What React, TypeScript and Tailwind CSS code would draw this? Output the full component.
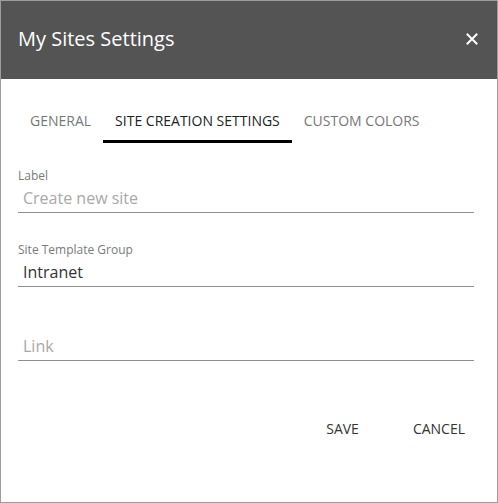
const font = { fontFamily: '"Open Sans", "Noto Sans", sans-serif' };

const Field = ({ label, value, placeholder }: { label?: string; value?: string; placeholder?: string }) => (
  <div className="flex flex-col">
    <div className="h-[14px] text-[12px] leading-[14px] text-[#7a7a7a]">{label}</div>
    <div className="mt-[4px] border-b border-[#8f8f8f] pb-[3px]">
      {value ? (
        <span className="block pl-[5px] text-[16px] leading-[22px] text-[#333]">{value}</span>
      ) : (
        <span className="block pl-[5px] text-[16px] leading-[22px] text-[#a8a8a8]">{placeholder}</span>
      )}
    </div>
  </div>
);

export default function App() {
  const tabs = ["GENERAL", "SITE CREATION SETTINGS", "CUSTOM COLORS"];
  const active = 1;

  return (
    <div style={font} className="box-border h-[503px] w-[498px] border border-[#9d9d9d] bg-white">
      <div className="flex h-[78px] items-center justify-between bg-[#545454] pb-[3px] pl-[17px] pr-[19px]">
        <h1 className="text-[20px] font-normal text-white">My Sites Settings</h1>
        <svg width="12" height="12" viewBox="0 0 12 12" className="mt-[1px]">
          <path d="M1.5 1.5 L10.5 10.5 M10.5 1.5 L1.5 10.5" stroke="white" strokeWidth="2" strokeLinecap="square" />
        </svg>
      </div>

      <div className="px-[17px]">
        <div className="flex pt-[20px]">
          {tabs.map((t, i) => (
            <div
              key={t}
              className={
                i === active
                  ? "flex h-[44px] items-center border-b-[3px] border-black px-3 pt-[1px] text-[14px] text-[#222]"
                  : "flex h-[44px] items-center border-b-[3px] border-transparent px-3 pt-[1px] text-[14px] text-[#777]"
              }
            >
              {t}
            </div>
          ))}
        </div>

        <div className="mr-[6px] flex flex-col gap-[30px] pt-[26px]">
          <Field label="Label" placeholder="Create new site" />
          <Field label="Site Template Group" value="Intranet" />
          <Field placeholder="Link" />
        </div>

        <div className="mt-[58px] mr-[5px] flex justify-end gap-[34px]">
          <button className="px-[10px] text-[14px] leading-[20px] text-[#333]">SAVE</button>
          <button className="px-[10px] text-[14px] leading-[20px] text-[#333]">CANCEL</button>
        </div>
      </div>
    </div>
  );
}
